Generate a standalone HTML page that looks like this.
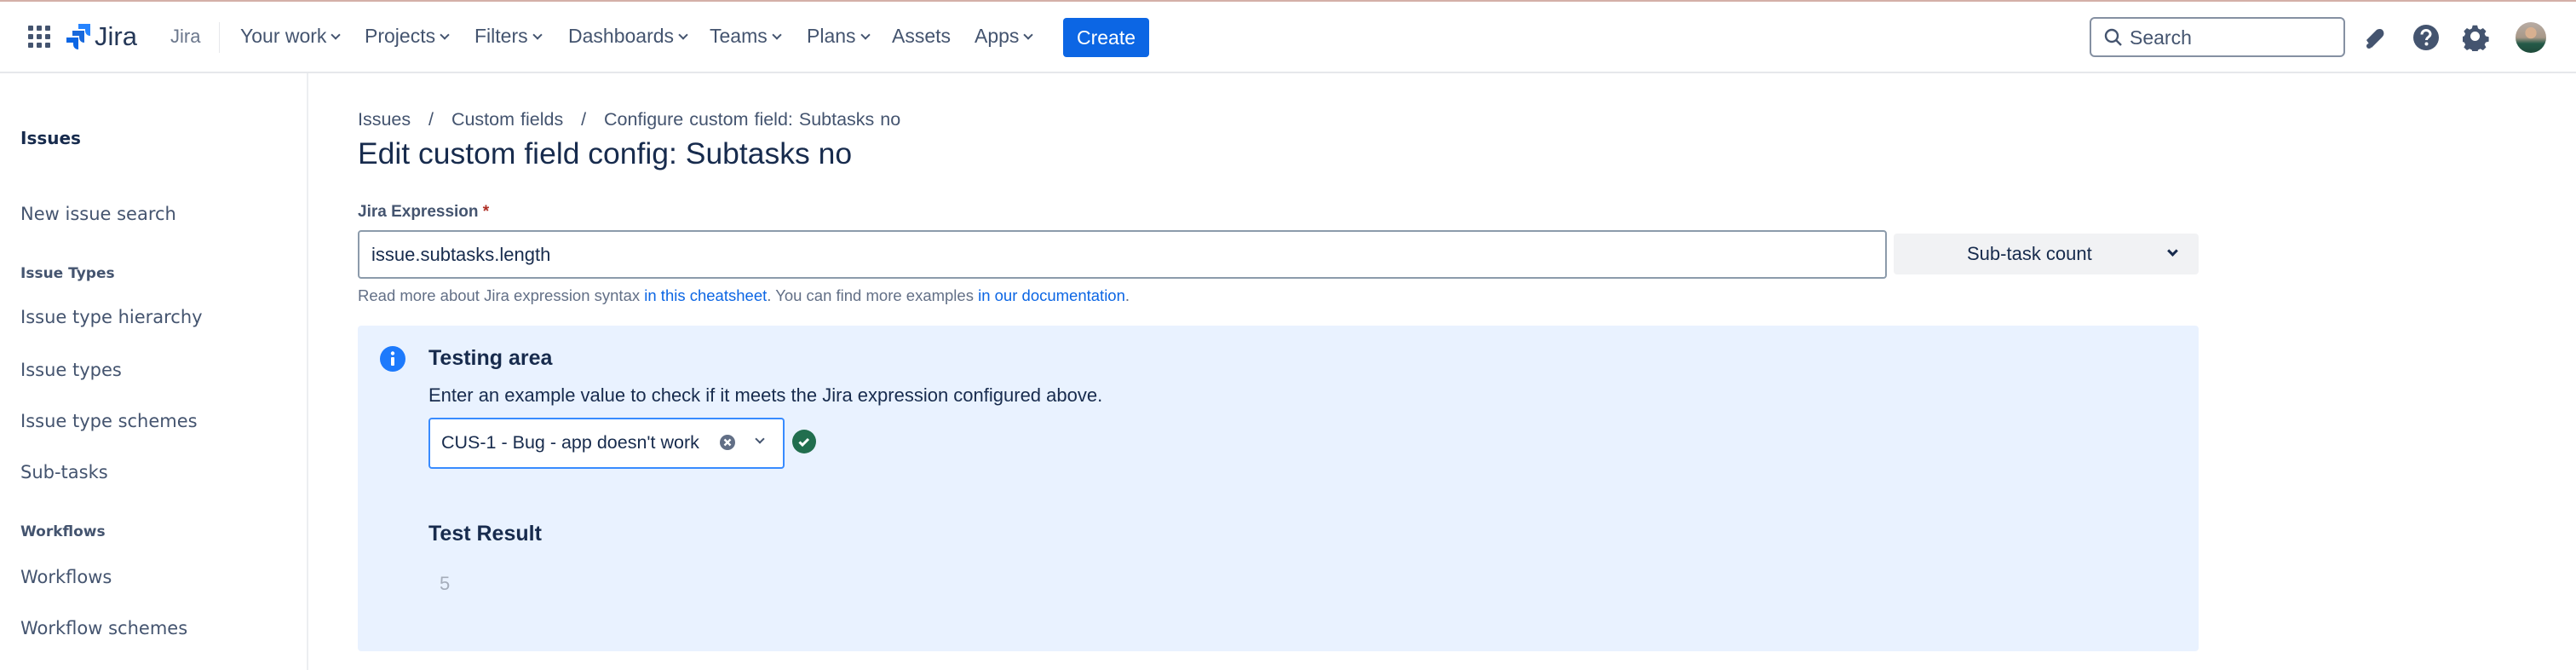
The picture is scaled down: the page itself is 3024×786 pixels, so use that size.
<!DOCTYPE html>
<html><head><meta charset="utf-8"><style>
*{box-sizing:border-box;margin:0;padding:0}
body{width:3024px;height:786px;overflow:hidden;background:#fff;font-family:"Liberation Sans",sans-serif;color:#172b4d;position:relative}
.a{position:absolute;white-space:nowrap}
.nav{font-size:23px;color:#44546f;top:29px}
.chev{display:inline-block;width:8px;height:8px;border-right:2.5px solid #44546f;border-bottom:2.5px solid #44546f;transform:rotate(45deg);margin-left:7px;vertical-align:5px}
.ch{position:absolute;width:9px;height:9px;border-right:3px solid #44546f;border-bottom:3px solid #44546f;transform:rotate(45deg)}
.sb{font-family:"DejaVu Sans",sans-serif;font-size:21px;color:#44546f;left:24px}
.sbh{font-family:"DejaVu Sans",sans-serif;font-size:17px;font-weight:bold;color:#44546f;left:24px}
</style></head><body>
<div class="a" style="left:0;top:0;width:3024px;height:2px;background:#d4b0a8"></div>
<div class="a" style="left:0;top:84px;width:3024px;height:2px;background:#e6e8eb"></div>
<svg class="a" style="left:33px;top:30px" width="26" height="26" viewBox="0 0 26 26" fill="#44546f">
<rect x="0" y="0" width="6" height="6" rx="1"/><rect x="10" y="0" width="6" height="6" rx="1"/><rect x="20" y="0" width="6" height="6" rx="1"/>
<rect x="0" y="10" width="6" height="6" rx="1"/><rect x="10" y="10" width="6" height="6" rx="1"/><rect x="20" y="10" width="6" height="6" rx="1"/>
<rect x="0" y="20" width="6" height="6" rx="1"/><rect x="10" y="20" width="6" height="6" rx="1"/><rect x="20" y="20" width="6" height="6" rx="1"/></svg>
<svg class="a" style="left:78px;top:28px" width="30" height="32" viewBox="0 0 30 32"><path d="M14 0h14v14c-4 0-6-3-6-6V6H14z" fill="#2684ff"/><path d="M7 8h14v14c-4 0-6-3-6-6v-2H7z" fill="#1868db"/><path d="M0 16h14v14c-4 0-6-3-6-6v-2H0z" fill="#0c66e4"/></svg>
<div class="a" style="left:111px;top:25px;font-size:31px;color:#253858">Jira</div>
<div class="a" style="left:200px;top:30px;font-size:22px;color:#6b778c">Jira</div>
<div class="a" style="left:257px;top:26px;width:1px;height:36px;background:#e6e8eb"></div>
<div class="a nav" style="left:282px">Your work<span class="chev"></span></div>
<div class="a nav" style="left:428px">Projects<span class="chev"></span></div>
<div class="a nav" style="left:557px">Filters<span class="chev"></span></div>
<div class="a nav" style="left:667px">Dashboards<span class="chev"></span></div>
<div class="a nav" style="left:833px">Teams<span class="chev"></span></div>
<div class="a nav" style="left:947px">Plans<span class="chev"></span></div>
<div class="a nav" style="left:1047px">Assets</div>
<div class="a nav" style="left:1144px">Apps<span class="chev"></span></div>
<div class="a" style="left:1248px;top:21px;width:101px;height:46px;background:#0c66e4;border-radius:4px;color:#fff;font-size:23px;text-align:center;line-height:46px">Create</div>
<div class="a" style="left:2453px;top:20px;width:300px;height:47px;border:2px solid #8590a2;border-radius:6px"></div>
<svg class="a" style="left:2470px;top:33px" width="22" height="22" viewBox="0 0 22 22"><circle cx="9" cy="9" r="7" fill="none" stroke="#44546f" stroke-width="2.4"/><path d="M14 14l6 6" stroke="#44546f" stroke-width="2.4"/></svg>
<div class="a" style="left:2500px;top:31px;font-size:23px;color:#44546f">Search</div>
<svg class="a" style="left:2774px;top:30px" width="28" height="28" viewBox="0 0 28 28"><path d="M4 17L16 5c3-2 7-1 8 2s0 5-2 7L10 26z" fill="#44546f"/><circle cx="7" cy="24" r="3" fill="#44546f"/></svg>
<svg class="a" style="left:2832px;top:28px" width="32" height="32" viewBox="0 0 32 32"><circle cx="16" cy="16" r="15" fill="#44546f"/><path d="M11 12.5c0-3 2.3-5 5-5s5 2 5 4.5c0 3.5-4.5 3.5-4.5 7" fill="none" stroke="#fff" stroke-width="3"/><circle cx="16.5" cy="23.5" r="2" fill="#fff"/></svg>
<svg class="a" style="left:2891px;top:28px" width="32" height="32" viewBox="0 0 32 32"><path d="M13 2h6l1 4 3 1.5 3.5-2 4 4-2 3.5 1.5 3 4 1v6l-4 1-1.5 3 2 3.5-4 4-3.5-2-3 1.5-1 4h-6l-1-4-3-1.5-3.5 2-4-4 2-3.5-1.5-3-4-1v-6l4-1 1.5-3-2-3.5 4-4 3.5 2 3-1.5z" fill="#44546f" transform="scale(.9)"/><circle cx="14.5" cy="14.5" r="5.5" fill="#fff"/></svg>
<div class="a" style="left:2953px;top:26px;width:36px;height:36px;border-radius:50%;background:radial-gradient(circle at 50% 35%,#d8b090 0 22%,transparent 23%),linear-gradient(180deg,#b8aca4 0%,#a89888 50%,#245a48 70%,#1f4a3a 100%)"></div>

<div class="a" style="left:360px;top:86px;width:2px;height:700px;background:#eceef1"></div>
<div class="a" style="left:24px;top:150px;font-family:'DejaVu Sans',sans-serif;font-size:20px;font-weight:bold;color:#172b4d">Issues</div>
<div class="a sb" style="top:239px">New issue search</div>
<div class="a sbh" style="top:311px">Issue Types</div>
<div class="a sb" style="top:360px">Issue type hierarchy</div>
<div class="a sb" style="top:422px">Issue types</div>
<div class="a sb" style="top:482px">Issue type schemes</div>
<div class="a sb" style="top:542px">Sub-tasks</div>
<div class="a sbh" style="top:614px">Workflows</div>
<div class="a sb" style="top:665px">Workflows</div>
<div class="a sb" style="top:725px">Workflow schemes</div>

<div class="a" style="left:420px;top:128px;font-size:21.5px;color:#44546f;word-spacing:1px">Issues &nbsp;&nbsp;/&nbsp;&nbsp; Custom fields &nbsp;&nbsp;/&nbsp;&nbsp; Configure custom field: Subtasks no</div>
<div class="a" style="left:420px;top:160px;font-size:35.5px;font-weight:500;color:#172b4d">Edit custom field config: Subtasks no</div>
<div class="a" style="left:420px;top:238px;font-size:19px;font-weight:bold;color:#44546f">Jira Expression <span style="color:#ae2e24">*</span></div>
<div class="a" style="left:420px;top:270px;width:1795px;height:57px;border:2px solid #8c9bab;border-radius:4px;padding-left:14px;line-height:53px;font-size:22px;color:#172b4d">issue.subtasks.length</div>
<div class="a" style="left:2223px;top:274px;width:358px;height:48px;background:#f1f2f4;border-radius:4px"></div>
<div class="a" style="left:2309px;top:285px;font-size:22px;color:#172b4d">Sub-task count</div>
<div class="ch" style="left:2546px;top:290px;border-color:#172b4d"></div>
<div class="a" style="left:420px;top:336px;font-size:18.5px;color:#626f86">Read more about Jira expression syntax <span style="color:#0c66e4">in this cheatsheet</span>. You can find more examples <span style="color:#0c66e4">in our documentation</span>.</div>

<div class="a" style="left:420px;top:382px;width:2161px;height:382px;background:#e9f2ff;border-radius:4px"></div>
<svg class="a" style="left:446px;top:406px" width="30" height="30" viewBox="0 0 30 30"><circle cx="15" cy="15" r="15" fill="#1d7afc"/><rect x="13" y="13" width="4" height="10" rx="1" fill="#fff"/><circle cx="15" cy="8.5" r="2.2" fill="#fff"/></svg>
<div class="a" style="left:503px;top:406px;font-size:25px;font-weight:bold;color:#172b4d">Testing area</div>
<div class="a" style="left:503px;top:451px;font-size:22px;color:#172b4d">Enter an example value to check if it meets the Jira expression configured above.</div>
<div class="a" style="left:503px;top:490px;width:418px;height:60px;background:#fff;border:2px solid #388bff;border-radius:4px"></div>
<div class="a" style="left:518px;top:507px;font-size:21.5px;color:#172b4d">CUS-1 - Bug - app doesn't work</div>
<svg class="a" style="left:845px;top:510px" width="18" height="18" viewBox="0 0 18 18"><circle cx="9" cy="9" r="9" fill="#626f86"/><path d="M5.5 5.5l7 7M12.5 5.5l-7 7" stroke="#fff" stroke-width="2.4"/></svg>
<div class="ch" style="left:888px;top:511px;width:8px;height:8px;border-width:2.5px"></div>
<svg class="a" style="left:930px;top:504px" width="28" height="28" viewBox="0 0 28 28"><circle cx="14" cy="14" r="14" fill="#216e4e"/><path d="M8.5 14.5l3.5 3.5 7-7" fill="none" stroke="#fff" stroke-width="3"/></svg>
<div class="a" style="left:503px;top:612px;font-size:25px;font-weight:bold;color:#172b4d">Test Result</div>
<div class="a" style="left:516px;top:672px;font-size:22px;color:#a5adba">5</div>
</body></html>
